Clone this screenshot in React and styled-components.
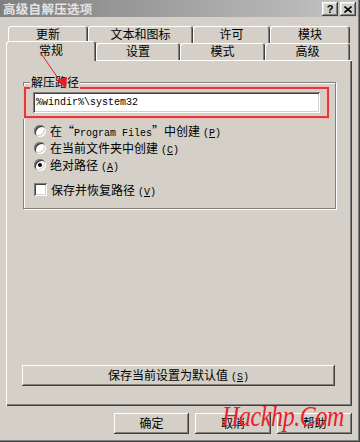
import React from "react";
import styled, { createGlobalStyle, css } from "styled-components";

const face = "#d4d0c8";
const cjk = `"Noto Sans CJK SC", "Noto Sans", sans-serif`;
const mono = `"Liberation Mono", "DejaVu Sans Mono", monospace`;

const Global = createGlobalStyle`
  html, body { margin: 0; padding: 0; background: ${face}; }
  * { box-sizing: border-box; }
`;

const Window = styled.div`
  position: relative;
  width: 360px;
  height: 442px;
  background: ${face};
  font-family: ${cjk};
  font-size: 12px;
  color: #000;
  display: flex;
  flex-direction: column;
  overflow: hidden;
  box-shadow: inset -1px -1px #404040, inset -2px -2px #808080;
`;

const TitleBar = styled.div`
  height: 17px;
  margin-right: 2px;
  background: linear-gradient(to right, #808080, #c4c4c4);
  display: flex;
  align-items: center;
  justify-content: space-between;
  padding: 0 2px 0 3px;
`;

const Title = styled.div`
  color: #e4e4e4;
  font-weight: bold;
  font-size: 12.5px;
  line-height: 17px;
  letter-spacing: 0.3px;
`;

const CapButtons = styled.div`
  display: flex;
  gap: 2px;
  margin-top: 1px;
`;

const CapBtn = styled.div`
  width: 16px;
  height: 14px;
  background: ${face};
  box-shadow: inset -1px -1px #404040, inset 1px 1px #fff,
    inset -2px -2px #808080, inset 2px 2px #e8e6e0;
  display: flex;
  align-items: center;
  justify-content: center;
  font-family: "Liberation Sans", sans-serif;
  font-weight: bold;
  font-size: 11px;
  line-height: 14px;
`;

const Content = styled.div`
  flex: 1;
  display: flex;
  flex-direction: column;
  padding: 9px 8px 0 6px;
`;

const TabRow = styled.div`
  display: flex;
  align-items: flex-end;
  height: ${(p) => p.$h}px;
  padding-left: ${(p) => p.$pl || 0}px;
  position: relative;
  z-index: ${(p) => p.$z || 0};
`;

const Tab = styled.div`
  width: ${(p) => p.$w}px;
  height: ${(p) => (p.$active ? 20 : 17)}px;
  margin-bottom: ${(p) => (p.$active ? -1 : 0)}px;
  background: ${face};
  border-radius: 3px 3px 0 0;
  box-shadow: inset 1px 1px #fff, inset -1px 0 #404040, inset -2px 0 #808080;
  text-align: center;
  line-height: ${(p) => (p.$active ? 17 : 16)}px;
  position: relative;
  z-index: ${(p) => (p.$active ? 2 : 1)};
`;

const Panel = styled.div`
  height: 346px;
  background: ${face};
  box-shadow: inset 1px 1px #fff, inset -1px -1px #404040,
    inset -2px -2px #808080;
  display: flex;
  flex-direction: column;
  padding: 22px 0 20px 0;
  position: relative;
  z-index: 1;
`;

const GroupBox = styled.div`
  position: relative;
  margin-left: 17px;
  width: 313px;
  border: 1px solid #808080;
  box-shadow: inset 1px 1px #fff, 1px 1px #fff;
  padding: 4px 0 10px 0;
`;

const Legend = styled.span`
  position: absolute;
  left: 6px;
  top: -9px;
  padding: 0 1px;
  background: ${face};
  line-height: 16px;
`;

const RedFrame = styled.div`
  width: 305px;
  height: 31px;
  border: 2px solid #e03a3a;
  box-shadow: 0 0 0 1px #f3b8b8, inset 0 0 0 1px #f3c4c4;
  padding: 3px 0 0 7px;
`;

const TextBox = styled.div`
  width: 287px;
  height: 21px;
  background: #fff;
  box-shadow: inset 1px 1px #808080, inset -1px -1px #fff,
    inset 2px 2px #404040, inset -2px -2px ${face};
  font-family: ${mono};
  font-size: 10px;
  line-height: 21px;
  padding-left: 3px;
  white-space: pre;
`;

const Options = styled.div`
  display: flex;
  flex-direction: column;
  margin-top: 4px;
  padding-left: 10px;
`;

const OptRow = styled.div`
  display: flex;
  align-items: center;
  height: 17px;
  gap: 4px;
  margin-top: ${(p) => p.$mt || 0}px;
  white-space: nowrap;
`;

const sunken = css`
  background: #fff;
  box-shadow: inset 1px 1px #808080, inset -1px -1px #fff,
    inset 2px 2px #404040, inset -2px -2px ${face};
`;

const Radio = styled.span`
  width: 12px;
  height: 12px;
  border-radius: 50%;
  ${sunken};
  display: flex;
  align-items: center;
  justify-content: center;
  flex: none;
  &::after {
    content: "";
    width: 4px;
    height: 4px;
    border-radius: 50%;
    background: ${(p) => (p.$on ? "#000" : "transparent")};
  }
`;

const Check = styled.span`
  width: 13px;
  height: 13px;
  ${sunken};
  flex: none;
`;

const Latin = styled.span`
  font-family: ${mono};
  font-size: 10px;
`;

const Mn = styled.span`
  font-family: ${mono};
  font-size: 10px;
  margin-left: 3px;
  & u { text-underline-offset: 1px; }
`;

const raised = css`
  background: ${face};
  box-shadow: inset -1px -1px #404040, inset 1px 1px #fff,
    inset -2px -2px #808080, inset 2px 2px ${face};
`;

const WideButton = styled.div`
  ${raised};
  margin-top: auto;
  margin-left: 16px;
  width: 313px;
  height: 21px;
  text-align: center;
  line-height: 20px;
`;

const ButtonRow = styled.div`
  display: flex;
  justify-content: flex-end;
  gap: 6px;
  margin-top: 7px;
`;

const Button = styled.div`
  ${raised};
  width: ${(p) => p.$w || 75}px;
  height: 21px;
  text-align: center;
  line-height: 20px;
`;

const Arrow = styled.svg`
  position: absolute;
  left: 0;
  top: 0;
  pointer-events: none;
  z-index: 5;
`;

const Watermark = styled.div`
  position: absolute;
  left: 222px;
  top: 398px;
  color: #ee1c2a;
  font-family: "Liberation Serif", serif;
  font-style: italic;
  font-size: 30px;
  line-height: 36px;
  letter-spacing: -0.5px;
  white-space: nowrap;
  transform: scaleX(0.8);
  transform-origin: left center;
  z-index: 6;
  pointer-events: none;
`;

const M = ({ k }) => (
  <Mn>
    (<u>{k}</u>)
  </Mn>
);

export default function App() {
  return (
    <>
      <Global />
      <Window>
        <TitleBar>
          <Title>高级自解压选项</Title>
          <CapButtons>
            <CapBtn>?</CapBtn>
            <CapBtn>
              <svg width="8" height="7" viewBox="0 0 8 7">
                <path d="M0.5 0.5 L7.5 6.5 M7.5 0.5 L0.5 6.5" stroke="#000" strokeWidth="1.6" />
              </svg>
            </CapBtn>
          </CapButtons>
        </TitleBar>
        <Content>
          <TabRow $h={17} $pl={2}>
            <Tab $w={80}>更新</Tab>
            <Tab $w={105}>文本和图标</Tab>
            <Tab $w={77}>许可</Tab>
            <Tab $w={80}>模块</Tab>
          </TabRow>
          <TabRow $h={17} $z={2}>
            <Tab $w={90} $active>常规</Tab>
            <Tab $w={84}>设置</Tab>
            <Tab $w={85}>模式</Tab>
            <Tab $w={85}>高级</Tab>
          </TabRow>
          <Panel>
            <GroupBox>
              <Legend>解压路径</Legend>
              <RedFrame>
                <TextBox>%windir%\system32</TextBox>
              </RedFrame>
              <Options>
                <OptRow>
                  <Radio />
                  <span>
                    在“<Latin>Program Files</Latin>”中创建<M k="P" />
                  </span>
                </OptRow>
                <OptRow>
                  <Radio />
                  <span>
                    在当前文件夹中创建<M k="C" />
                  </span>
                </OptRow>
                <OptRow>
                  <Radio $on />
                  <span>
                    绝对路径<M k="A" />
                  </span>
                </OptRow>
                <OptRow $mt={8}>
                  <Check />
                  <span>
                    保存并恢复路径<M k="V" />
                  </span>
                </OptRow>
              </Options>
            </GroupBox>
            <WideButton>
              保存当前设置为默认值<M k="S" />
            </WideButton>
          </Panel>
          <ButtonRow>
            <Button $w={75}>确定</Button>
            <Button $w={76}>取消</Button>
            <Button $w={75}>帮助</Button>
          </ButtonRow>
        </Content>
        <Arrow width="90" height="100" viewBox="0 0 90 100">
          <path d="M40 52 L62 84" stroke="#e0202a" strokeWidth="1" fill="none" />
          <path d="M57 80 L67 77 L66 89 Z" fill="#e81c28" />
        </Arrow>
        <Watermark>Hackhp.Com</Watermark>
      </Window>
    </>
  );
}
